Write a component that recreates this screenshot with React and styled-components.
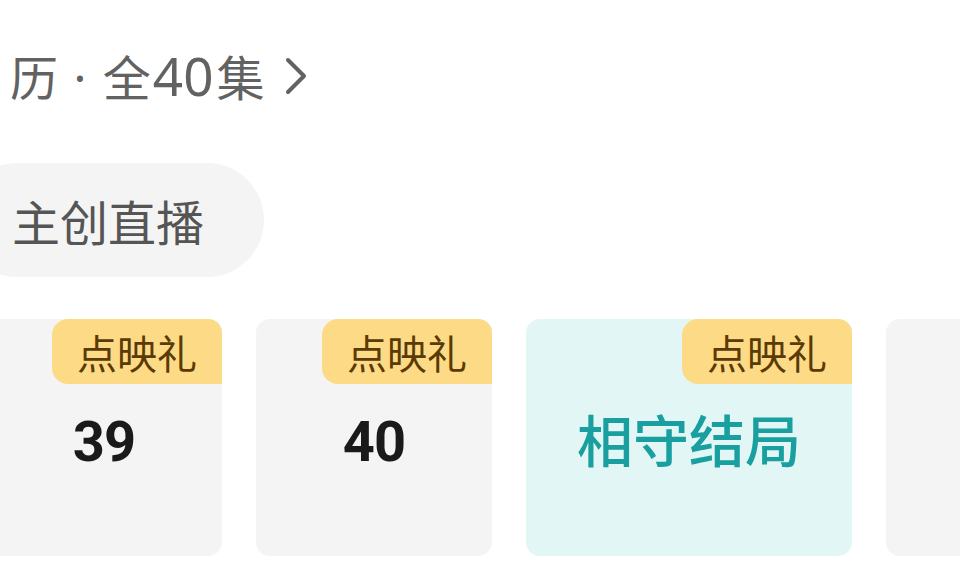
import React from 'react';
import styled, { createGlobalStyle } from 'styled-components';

const GlobalStyle = createGlobalStyle`
  html, body {
    margin: 0;
    padding: 0;
    background: #ffffff;
    overflow: hidden;
  }
  body {
    font-family: "Noto Sans CJK SC", "Noto Sans", sans-serif;
  }
`;

const Page = styled.div`
  width: 960px;
  height: 577px;
  overflow: hidden;
  display: flex;
  flex-direction: column;
`;

const Title = styled.div`
  display: flex;
  align-items: center;
  gap: 20px;
  margin: 48px 0 0 10px;
  height: 56px;
  font-size: 48px;
  line-height: 56px;
  color: #626262;
`;

const Dot = styled.span`
  font-family: "Noto Sans", sans-serif;
  white-space: pre;
  margin: 0 4px 0 3px;
`;

const Digits = styled.span`
  font-family: "Noto Sans", sans-serif;
  font-size: 53px;
  margin: 0 3px 0 2px;
`;

const Pill = styled.div`
  align-self: flex-start;
  display: flex;
  align-items: center;
  height: 114px;
  margin: 59px 0 0 -40px;
  padding: 0 60px 0 52px;
  border-radius: 57px;
  background: #f4f4f4;
  font-size: 48px;
  color: #555555;
`;

const CardRow = styled.div`
  display: flex;
  gap: 34px;
  margin: 42px 0 0 -14px;
`;

const Card = styled.div`
  position: relative;
  flex-shrink: 0;
  min-width: 236px;
  height: 237px;
  box-sizing: border-box;
  padding: 8px 51px 0;
  border-radius: 14px;
  background: ${props => (props.$active ? '#e2f7f5' : '#f4f4f4')};
  display: flex;
  align-items: center;
  justify-content: center;
`;

const Badge = styled.div`
  position: absolute;
  top: 0;
  right: 0;
  height: 65px;
  padding: 0 25px;
  display: flex;
  align-items: center;
  border-radius: 16px 14px 0 16px;
  background: #fdda85;
  color: #5a3a06;
  font-size: 40px;
`;

const EpNumber = styled.div`
  font-family: Roboto, "Liberation Sans", sans-serif;
  font-weight: 700;
  font-size: 56px;
  letter-spacing: -1px;
  color: #1a1a1a;
`;

const EpTitle = styled.div`
  margin-top: -8px;
  font-size: 56px;
  font-weight: 500;
  color: #1a9fa0;
  white-space: nowrap;
`;

const Chevron = () => (
  <svg width="22" height="38" viewBox="0 0 22 38" fill="none">
    <path d="M3 3 L19 19 L3 35" stroke="#626262" strokeWidth="4" strokeLinecap="round" strokeLinejoin="round" />
  </svg>
);

const episodes = [
  { id: 39, label: '39' },
  { id: 40, label: '40' },
  { id: 41, label: '相守结局', special: true },
  { id: 42, label: '', empty: true },
];

export default function App() {
  return (
    <Page>
      <GlobalStyle />
      <Title>
        <span>
          历<Dot> · </Dot>全<Digits>40</Digits>集
        </span>
        <Chevron />
      </Title>
      <Pill>主创直播</Pill>
      <CardRow>
        {episodes.map(ep => (
          <Card key={ep.id} $active={ep.special}>
            {!ep.empty && <Badge>点映礼</Badge>}
            {ep.special ? <EpTitle>{ep.label}</EpTitle> : <EpNumber>{ep.label}</EpNumber>}
          </Card>
        ))}
      </CardRow>
    </Page>
  );
}
